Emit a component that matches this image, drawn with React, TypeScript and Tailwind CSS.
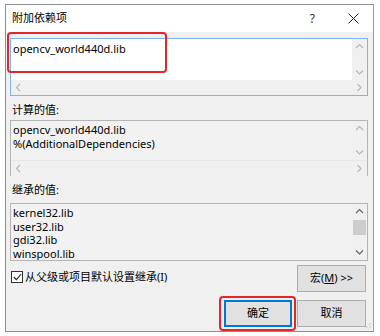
import React from "react";

const font = { fontFamily: '"Noto Sans", "Noto Sans CJK SC", sans-serif' };

function Chevron({ dir, color = "#a6a6a6" }: { dir: "up" | "down" | "left" | "right"; color?: string }) {
  const d =
    dir === "up"
      ? "M1 5 L4.5 1.5 L8 5"
      : dir === "down"
      ? "M1 1.5 L4.5 5 L8 1.5"
      : dir === "left"
      ? "M5 1 L1.5 4.5 L5 8"
      : "M1.5 1 L5 4.5 L1.5 8";
  const w = dir === "up" || dir === "down" ? 9 : 7;
  const h = dir === "up" || dir === "down" ? 7 : 9;
  return (
    <svg width={w} height={h} viewBox={`0 0 ${w} ${h}`}>
      <path d={d} fill="none" stroke={color} strokeWidth="1.1" />
    </svg>
  );
}

function VScroll({ dark = false, thumb = false }: { dark?: boolean; thumb?: boolean }) {
  const c = dark ? "#606060" : "#b4b4b4";
  return (
    <div className="flex h-full w-[15px] flex-col bg-[#f0f0f0]">
      <div className="flex h-[15px] items-center justify-center">
        <Chevron dir="up" color={c} />
      </div>
      {thumb && <div className="mx-[1px] mt-[1px] h-[15px] bg-[#cdcdcd]" />}
      <div className="flex-1" />
      <div className="flex h-[15px] items-center justify-center">
        <Chevron dir="down" color={c} />
      </div>
    </div>
  );
}

function HScroll() {
  return (
    <div className="flex h-[15px] items-center justify-between bg-[#f0f0f0] px-[4px]">
      <Chevron dir="left" color="#b4b4b4" />
      <Chevron dir="right" color="#b4b4b4" />
    </div>
  );
}

function Button({ children, primary = false }: { children: React.ReactNode; primary?: boolean }) {
  return (
    <div
      className={`flex h-[27px] items-center justify-center bg-[#e1e1e1] text-[11px] text-black ${
        primary ? "w-[68px] border-2 border-[#0078d7]" : "w-[69px] border border-[#adadad]"
      }`}
    >
      {children}
    </div>
  );
}

export default function App() {
  return (
    <div className="relative h-[336px] w-[380px] overflow-hidden bg-white pl-[5px] pt-[4px]" style={font}>
      <div className="relative flex h-[328px] w-[369px] flex-col border border-[#8f8f8f] border-r-[#9a9a9a] bg-[#f0f0f0]">
        {/* title bar */}
        <div className="flex h-[27px] items-center bg-white pl-[6px] text-[11px] text-black">
          <span className="flex-1">附加依赖项</span>
          <span className="mr-[33px] text-[12px] text-[#333]">?</span>
          <svg width="11" height="11" viewBox="0 0 11 11" className="mr-[14px]">
            <path d="M0.5 0.5 L10.5 10.5 M10.5 0.5 L0.5 10.5" stroke="#222" strokeWidth="1" />
          </svg>
        </div>

        {/* content */}
        <div className="flex flex-1 flex-col pl-[4px] pr-[5px] pt-[6px] text-[11px] text-black">
          {/* box 1 */}
          <div className="grid h-[58px] grid-cols-[1fr_15px] grid-rows-[1fr_15px] border border-[#7eb4ea]">
            <div className="bg-white pl-[2px] pt-[3px] leading-[14px]">opencv_world440d.lib</div>
            <VScroll />
            <div className="col-span-2">
              <HScroll />
            </div>
          </div>

          <div className="mt-[6px] h-[16px] leading-[16px] pl-[2px]">计算的值:</div>

          {/* box 2 */}
          <div className="mt-[2px] grid h-[56px] grid-cols-[1fr_15px] grid-rows-[1fr_15px] border border-[#b4b4b4]">
            <div className="bg-[#f2f2f2] pl-[2px] pt-[2px] leading-[14px]">
              <div>opencv_world440d.lib</div>
              <div>%(AdditionalDependencies)</div>
            </div>
            <VScroll />
            <div className="col-span-2 border-t border-[#e6e6e6]">
              <HScroll />
            </div>
          </div>

          <div className="mt-[6px] h-[16px] leading-[16px] pl-[2px]">继承的值:</div>

          {/* box 3 */}
          <div className="mt-[5px] flex h-[58px] border border-[#b4b4b4]">
            <div className="flex-1 overflow-hidden bg-[#f2f2f2] pl-[2px] pt-[2px] leading-[13.6px]">
              <div>kernel32.lib</div>
              <div>user32.lib</div>
              <div>gdi32.lib</div>
              <div>winspool.lib</div>
            </div>
            <VScroll dark thumb />
          </div>

          {/* inherit row */}
          <div className="mt-[4px] flex items-start pr-[2px]">
            <div className="mt-[6px] flex flex-1 items-center pl-[1px]">
              <div className="flex h-[12px] w-[12px] items-center justify-center border border-[#333] bg-white">
                <svg width="9" height="8" viewBox="0 0 9 8">
                  <path d="M0.8 4 L3.3 6.6 L8.2 1" fill="none" stroke="#222" strokeWidth="1.1" />
                </svg>
              </div>
              <span className="ml-[2px] leading-[12px]">从父级或项目默认设置继承(I)</span>
            </div>
            <Button>
              宏(<span className="underline">M</span>)&nbsp;&gt;&gt;
            </Button>
          </div>

          {/* buttons */}
          <div className="mt-[8px] flex justify-end gap-[5px] pr-[2px]">
            <Button primary>确定</Button>
            <Button>取消</Button>
          </div>
        </div>

        {/* resize grip */}
        <svg width="8" height="8" viewBox="0 0 8 8" className="absolute bottom-[1px] right-[1px]">
          <path d="M7 1 L1 7 M7 4 L4 7" stroke="#b0b0b0" strokeWidth="1" strokeDasharray="1 1" />
        </svg>
      </div>

      {/* red highlight boxes */}
      <div className="absolute left-[7px] top-[32px] h-[41px] w-[160px] rounded-[4px] border-[2.5px] border-[#e3262b]" />
      <div className="absolute left-[219px] top-[296px] h-[35px] w-[77px] rounded-[4px] border-[2.5px] border-[#e3262b]" />
    </div>
  );
}
